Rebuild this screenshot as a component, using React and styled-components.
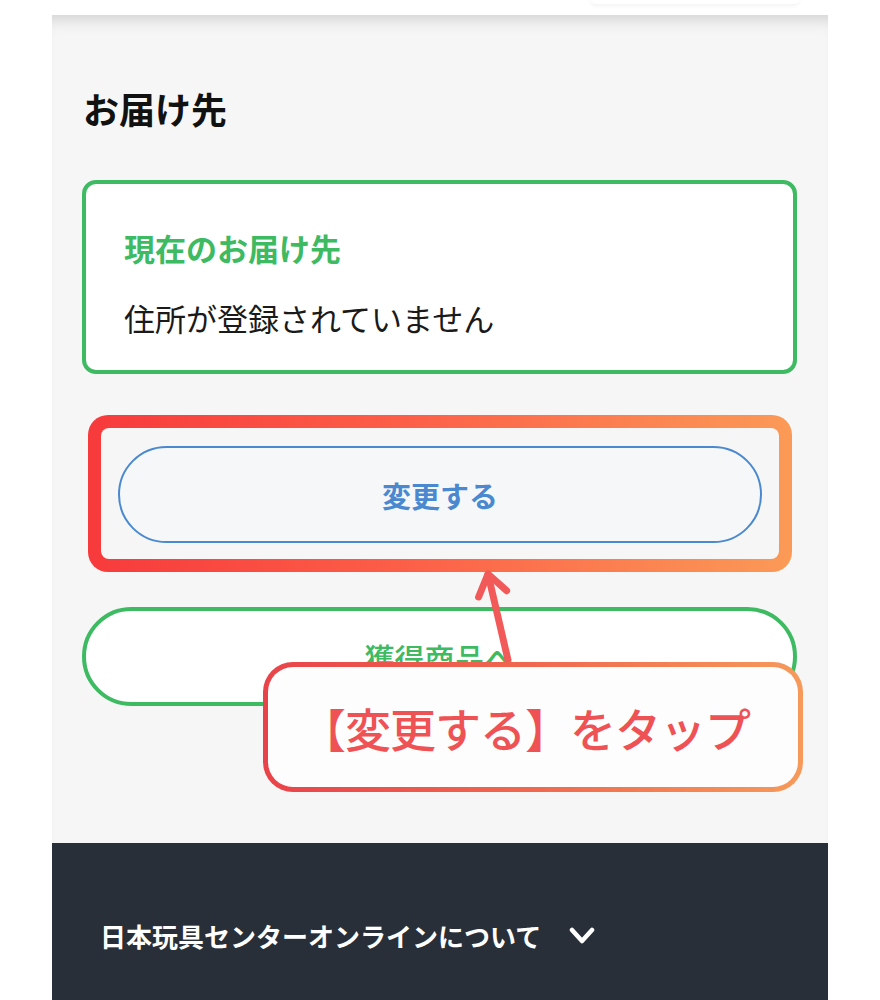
import React from "react";
import styled, { createGlobalStyle } from "styled-components";

const GlobalStyle = createGlobalStyle`
  body {
    margin: 0;
    background: #ffffff;
    font-family: "Noto Sans CJK JP", "Noto Sans", sans-serif;
  }
`;

const Page = styled.div`
  width: 880px;
  height: 1000px;
  overflow: hidden;
`;

const TopStrip = styled.div`
  height: 15px;
  display: flex;
  justify-content: flex-end;
  padding-right: 80px;
`;

const TopPill = styled.div`
  width: 210px;
  height: 6px;
  margin-top: -2px;
  border-radius: 0 0 12px 12px;
  background: #fff;
  box-shadow: 0 2px 4px rgba(0, 0, 0, 0.05);
`;

const Panel = styled.div`
  position: relative;
  margin-left: 52px;
  width: 776px;
  background: #f6f6f6;
  box-shadow: inset 0 16px 16px -12px rgba(0, 0, 0, 0.16);
`;

const Section = styled.section`
  padding: 70px 31px 137px 30px;
  display: flex;
  flex-direction: column;
`;

const Heading = styled.h2`
  margin: 0 0 0 1px;
  font-size: 36px;
  line-height: 46px;
  font-weight: 700;
  color: #111;
`;

const AddressCard = styled.div`
  margin-top: 49px;
  height: 194px;
  box-sizing: border-box;
  border: 4px solid #3dba62;
  border-radius: 14px;
  background: #fff;
  padding: 44px 38px 32px;
  display: flex;
  flex-direction: column;
  gap: 30px;
`;

const CardTitle = styled.div`
  font-size: 31px;
  line-height: 40px;
  font-weight: 700;
  color: #3dba62;
`;

const CardText = styled.div`
  font-size: 31px;
  line-height: 40px;
  font-weight: 400;
  color: #1a1a1a;
`;

const Highlight = styled.div`
  margin: 41px 5px 0 6px;
  padding: 13px;
  border-radius: 20px;
  background: linear-gradient(90deg, #f73a3c 0%, #fc5f48 45%, #fb9a57 100%);
`;

const HighlightInner = styled.div`
  background: #f6f6f6;
  border-radius: 8px;
  padding: 18px 17px 16px;
`;

const PillButton = styled.button`
  width: 100%;
  height: ${(p) => p.$h}px;
  box-sizing: border-box;
  border: ${(p) => p.$bw}px solid ${(p) => p.$color};
  border-radius: 60px;
  background: ${(p) => p.$bg};
  color: ${(p) => p.$color};
  font-family: inherit;
  font-size: ${(p) => p.$size}px;
  font-weight: ${(p) => p.$weight};
  display: flex;
  align-items: center;
  justify-content: center;
  padding: 0;
`;

const GreenWrap = styled.div`
  margin-top: 35px;
`;

const Arrow = styled.svg`
  position: absolute;
  left: 418px;
  top: 550px;
  overflow: visible;
`;

const Callout = styled.div`
  position: absolute;
  left: 211px;
  top: 647px;
  width: 540px;
  height: 130px;
  box-sizing: border-box;
  border: 5px solid transparent;
  border-radius: 30px;
  padding-right: 16px;
  background: linear-gradient(#fdfdfd, #fdfdfd) padding-box,
    linear-gradient(90deg, #e9434a 0%, #f0684f 50%, #f69a5a 100%) border-box;
  display: flex;
  align-items: center;
  justify-content: center;
  font-size: 46px;
  font-weight: 500;
  letter-spacing: -1px;
  color: #ef5254;
`;

const Footer = styled.footer`
  height: 160px;
  background: #282f38;
  padding: 75px 0 0 48px;
  box-sizing: border-box;
  display: flex;
  align-items: flex-start;
  gap: 28px;
`;

const FooterText = styled.span`
  font-size: 26px;
  line-height: 36px;
  font-weight: 700;
  color: #fff;
`;

const Chevron = styled.svg`
  margin-top: 8px;
`;

export default function App() {
  return (
    <Page>
      <GlobalStyle />
      <TopStrip>
        <TopPill />
      </TopStrip>
      <Panel>
        <Section>
          <Heading>お届け先</Heading>
          <AddressCard>
            <CardTitle>現在のお届け先</CardTitle>
            <CardText>住所が登録されていません</CardText>
          </AddressCard>
          <Highlight>
            <HighlightInner>
              <PillButton $h={97} $bw={2.5} $size={29} $color="#4a89d0" $bg="#f6f7f9" $weight={700}>
                変更する
              </PillButton>
            </HighlightInner>
          </Highlight>
          <GreenWrap>
            <PillButton $h={99} $bw={4} $size={30} $color="#3dba62" $bg="#ffffff" $weight={500}>
              獲得商品へ
            </PillButton>
          </GreenWrap>
        </Section>
        <Arrow width="50" height="115" viewBox="0 0 50 115">
          <g stroke="#f25a5a" strokeWidth="7" strokeLinecap="round" strokeLinejoin="round" fill="none">
            <line x1="38" y1="95" x2="18" y2="9" />
            <polyline points="8.6,32 18,9 36.6,25.7" />
          </g>
        </Arrow>
        <Callout>【変更する】をタップ</Callout>
        <Footer>
          <FooterText>日本玩具センターオンラインについて</FooterText>
          <Chevron width="26" height="20" viewBox="0 0 26 20">
            <polyline
              points="3,4 13,15 23,4"
              fill="none"
              stroke="#fff"
              strokeWidth="4.5"
              strokeLinecap="round"
              strokeLinejoin="round"
            />
          </Chevron>
        </Footer>
      </Panel>
    </Page>
  );
}
